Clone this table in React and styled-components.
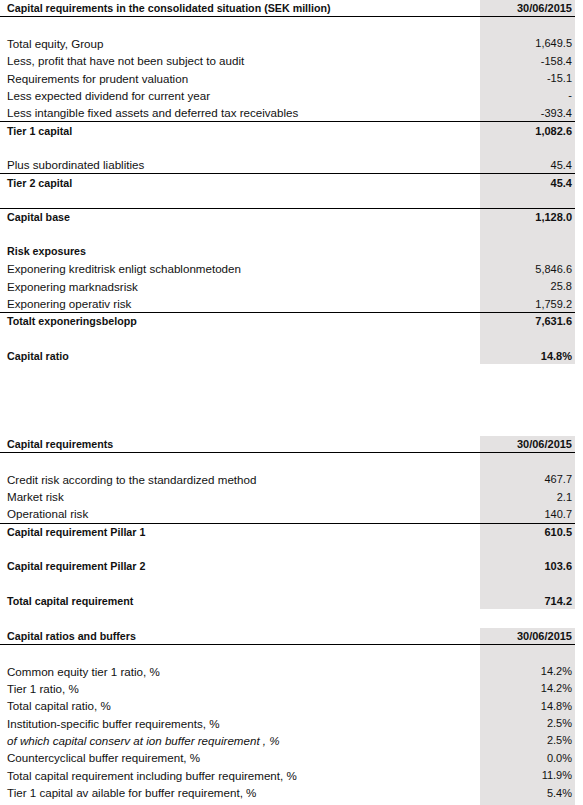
import React from 'react';
import styled, {createGlobalStyle} from 'styled-components';

const ROW = 17.35;

const GlobalStyle = createGlobalStyle`
  body {
    margin: 0;
    background: #fff;
    font-family: "Liberation Sans", Arial, sans-serif;
    color: #111;
  }
`;

const Page = styled.div`
  width: 575px;
  display: flex;
  flex-direction: column;
`;

const Table = styled.section`
  display: flex;
  flex-direction: column;
  margin-top: ${p => p.gap || 0}px;
`;

const Row = styled.div`
  display: grid;
  grid-template-columns: 480px 95px;
  height: ${ROW}px;
  box-sizing: border-box;
  border-top: ${p => p.ruled ? '1.5px solid #000' : 'none'};
  border-bottom: ${p => p.head ? '1.5px solid #000' : 'none'};
  font-size: ${p => (p.bold || p.head) ? 10.7 : 11.6}px;
  font-weight: ${p => (p.bold || p.head) ? 700 : 400};
  font-style: ${p => p.italic ? 'italic' : 'normal'};
`;

const Label = styled.div`
  padding-left: 7px;
  display: flex;
  align-items: center;
  white-space: nowrap;
`;

const Value = styled.div`
  background: #e4e2e2;
  padding-right: 3px;
  display: flex;
  align-items: center;
  justify-content: flex-end;
  font-style: normal;
  font-size: 11px;
  white-space: nowrap;
`;

const tables = [
  {
    gap: 0,
    title: 'Capital requirements in the consolidated situation (SEK million)',
    rows: [
      {},
      {label: 'Total equity, Group', value: '1,649.5'},
      {label: 'Less, profit that have not been subject to audit', value: '-158.4'},
      {label: 'Requirements for prudent valuation', value: '-15.1'},
      {label: 'Less expected dividend for current year', value: '-'},
      {label: 'Less intangible fixed assets and deferred tax receivables', value: '-393.4'},
      {label: 'Tier 1 capital', value: '1,082.6', bold: true, ruled: true},
      {},
      {label: 'Plus subordinated liablities', value: '45.4'},
      {label: 'Tier 2 capital', value: '45.4', bold: true, ruled: true},
      {},
      {label: 'Capital base', value: '1,128.0', bold: true, ruled: true},
      {},
      {label: 'Risk exposures', bold: true},
      {label: 'Exponering kreditrisk enligt schablonmetoden', value: '5,846.6'},
      {label: 'Exponering marknadsrisk', value: '25.8'},
      {label: 'Exponering operativ risk', value: '1,759.2'},
      {label: 'Totalt exponeringsbelopp', value: '7,631.6', bold: true, ruled: true},
      {},
      {label: 'Capital ratio', value: '14.8%', bold: true}
    ]
  },
  {
    gap: 71.6,
    title: 'Capital requirements',
    rows: [
      {},
      {label: 'Credit risk according to the standardized method', value: '467.7'},
      {label: 'Market risk', value: '2.1'},
      {label: 'Operational risk', value: '140.7'},
      {label: 'Capital requirement Pillar 1', value: '610.5', bold: true, ruled: true},
      {},
      {label: 'Capital requirement Pillar 2', value: '103.6', bold: true},
      {},
      {label: 'Total capital requirement', value: '714.2', bold: true}
    ]
  },
  {
    gap: 18.5,
    title: 'Capital ratios and buffers',
    rows: [
      {},
      {label: 'Common equity tier 1 ratio, %', value: '14.2%'},
      {label: 'Tier 1 ratio, %', value: '14.2%'},
      {label: 'Total capital ratio, %', value: '14.8%'},
      {label: 'Institution-specific buffer requirements, %', value: '2.5%'},
      {label: 'of which capital conserv at ion buffer requirement , %', value: '2.5%', italic: true},
      {label: 'Countercyclical buffer requirement, %', value: '0.0%'},
      {label: 'Total capital requirement including buffer requirement, %', value: '11.9%'},
      {label: 'Tier 1 capital av ailable for buffer requirement, %', value: '5.4%'},
      {}
    ]
  }
];

export default function App() {
  return (
    <Page>
      <GlobalStyle/>
      {tables.map((t, i) => (
        <Table key={i} gap={t.gap}>
          <Row head>
            <Label>{t.title}</Label>
            <Value>30/06/2015</Value>
          </Row>
          {t.rows.map((r, j) => (
            <Row key={j} bold={r.bold} ruled={r.ruled} italic={r.italic}>
              <Label>{r.label}</Label>
              <Value>{r.value}</Value>
            </Row>
          ))}
        </Table>
      ))}
    </Page>
  );
}
